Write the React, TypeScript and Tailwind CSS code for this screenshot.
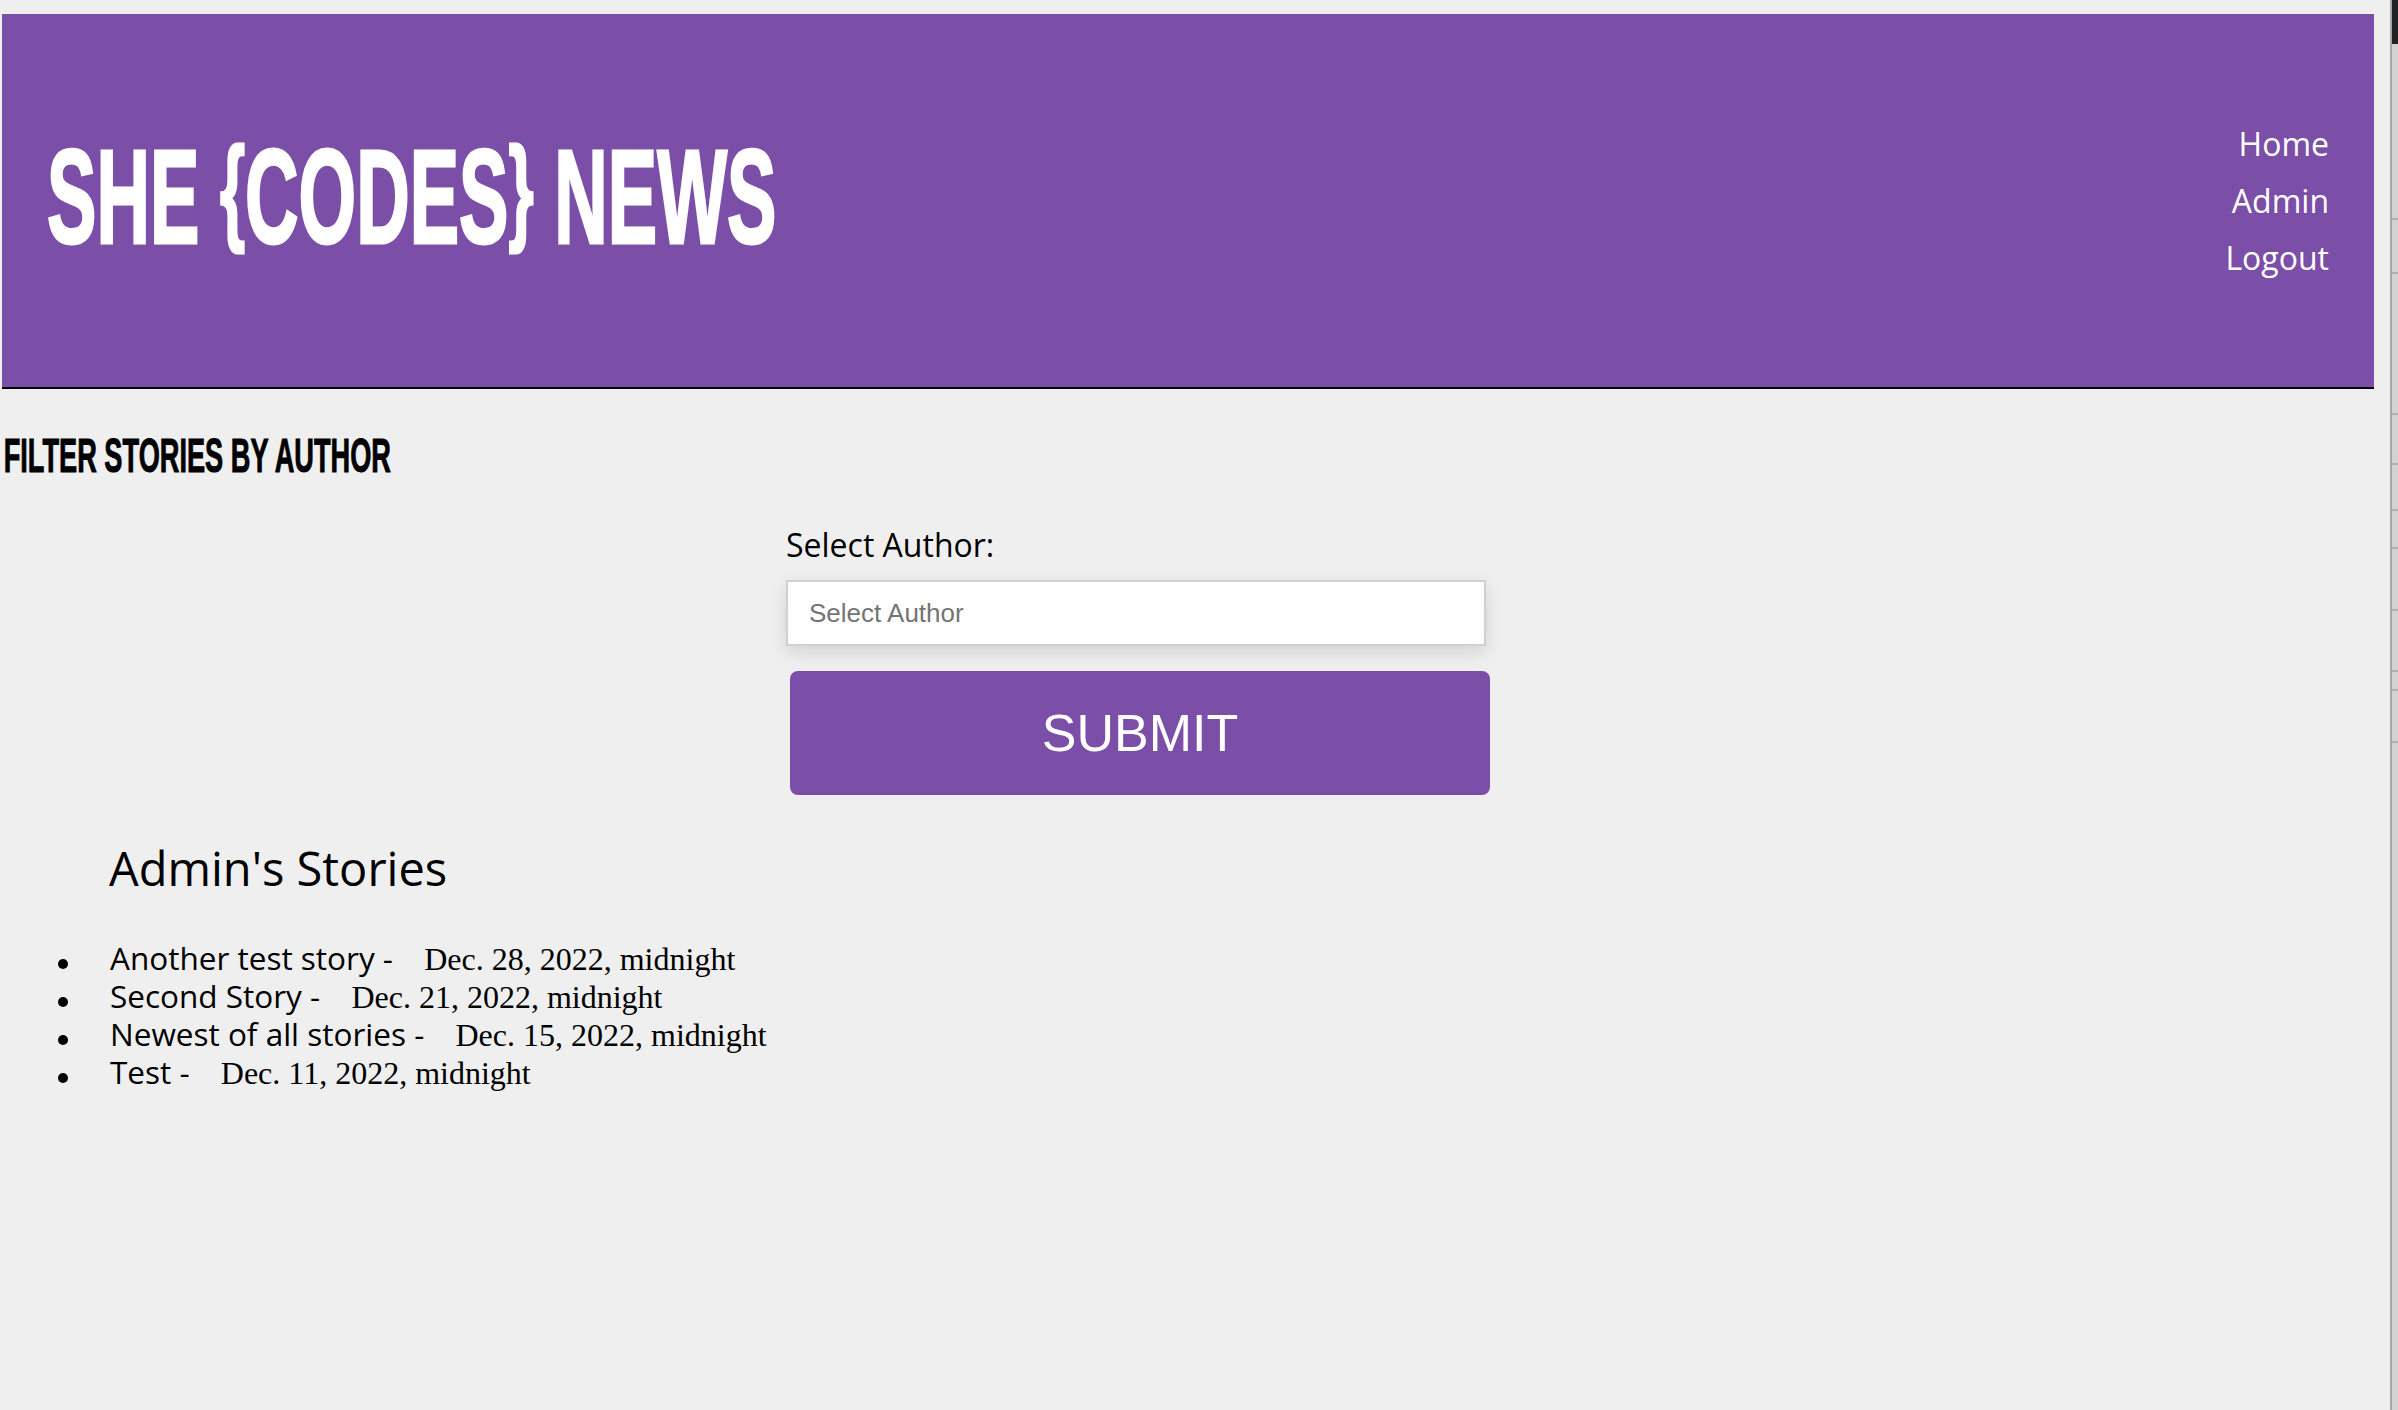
import React from "react";

const stories = [
  { title: "Another test story", date: "Dec. 28, 2022, midnight" },
  { title: "Second Story", date: "Dec. 21, 2022, midnight" },
  { title: "Newest of all stories", date: "Dec. 15, 2022, midnight" },
  { title: "Test", date: "Dec. 11, 2022, midnight" },
];

const sans = "font-['Open_Sans','Liberation_Sans',sans-serif]";

export default function App() {
  return (
    <div className="flex min-h-[1410px] w-full bg-[#efefef]">
      <div className="flex-1 pt-[14px] pl-[2px] pr-[16px]">
        <header className="flex h-[375px] items-center justify-between border-b-2 border-black bg-[#7b4ea8] pl-[45px] pr-[45px]">
          <h1 className="origin-left scale-x-[0.557] whitespace-nowrap font-['Liberation_Sans',Arial,sans-serif] text-[133px] font-bold leading-none text-white [-webkit-text-stroke:3px_white] -mt-[6px]">
            SHE <span className="align-[14px] text-[116px]">{"{"}</span>CODES<span className="align-[14px] text-[116px]">{"}"}</span> NEWS
          </h1>
          <nav className={`flex flex-col items-end text-[32px] leading-[57px] text-white ${sans}`}>
            <a>Home</a>
            <a>Admin</a>
            <a>Logout</a>
          </nav>
        </header>

        <h2 className="mt-[42px] origin-left scale-x-[0.555] whitespace-nowrap pl-[3px] font-['Liberation_Sans',Arial,sans-serif] text-[49px] font-bold leading-[49px] text-black [-webkit-text-stroke:1px_black]">
          FILTER STORIES BY AUTHOR
        </h2>

        <div className="ml-[784px] mt-[45px] w-[704px]">
          <label className={`block text-[32px] leading-[40px] text-black ${sans}`}>Select Author:</label>
          <div className="mt-[15px] flex h-[66px] w-[700px] items-center border-2 border-[#d0d0d0] bg-white pl-[21px] shadow-[0_6px_18px_rgba(0,0,0,0.12)]">
            <span className="font-['Liberation_Sans',Arial,sans-serif] text-[26px] text-[#757575]">Select Author</span>
          </div>
          <button className="ml-[4px] mt-[25px] flex h-[124px] w-[700px] items-center justify-center rounded-[8px] bg-[#7b4ea8] font-['Liberation_Sans',Arial,sans-serif] text-[52px] text-white">
            SUBMIT
          </button>
        </div>

        <h3 className={`ml-[107px] mt-[45px] text-[47px] leading-[56px] text-black ${sans}`}>Admin's Stories</h3>

        <ul className="mt-[43px]">
          {stories.map((s) => (
            <li key={s.title} className={`flex h-[38px] items-start whitespace-nowrap text-[31.5px] leading-[38px] text-black ${sans}`}>
              <span className="ml-[56px] mr-[42px] mt-[20px] h-[10px] w-[10px] shrink-0 rounded-full bg-black" />
              <span>
                {s.title} -{" "}
                <span className="ml-[23px] font-['Liberation_Serif','Times_New_Roman',serif] text-[32px] leading-none">{s.date}</span>
              </span>
            </li>
          ))}
        </ul>
      </div>

      <div className="flex w-[8px] flex-col border-l-2 border-[#a8a8a8] bg-[#d2d2d2]">
        <div className="h-[44px] bg-[#202326]" />
        <div className="mt-[174px] h-[2px] bg-[#b0b0b0]" />
        <div className="mt-[52px] h-[2px] bg-[#b0b0b0]" />
        <div className="mt-[139px] h-[2px] bg-[#b0b0b0]" />
        <div className="mt-[48px] h-[2px] bg-[#b0b0b0]" />
        <div className="mt-[44px] h-[2px] bg-[#b0b0b0]" />
        <div className="mt-[36px] h-[2px] bg-[#b0b0b0]" />
        <div className="mt-[60px] h-[2px] bg-[#b0b0b0]" />
        <div className="mt-[59px] h-[2px] bg-[#b0b0b0]" />
        <div className="mt-[17px] h-[2px] bg-[#b0b0b0]" />
        <div className="mt-[50px] h-[2px] bg-[#b0b0b0]" />
      </div>
    </div>
  );
}
